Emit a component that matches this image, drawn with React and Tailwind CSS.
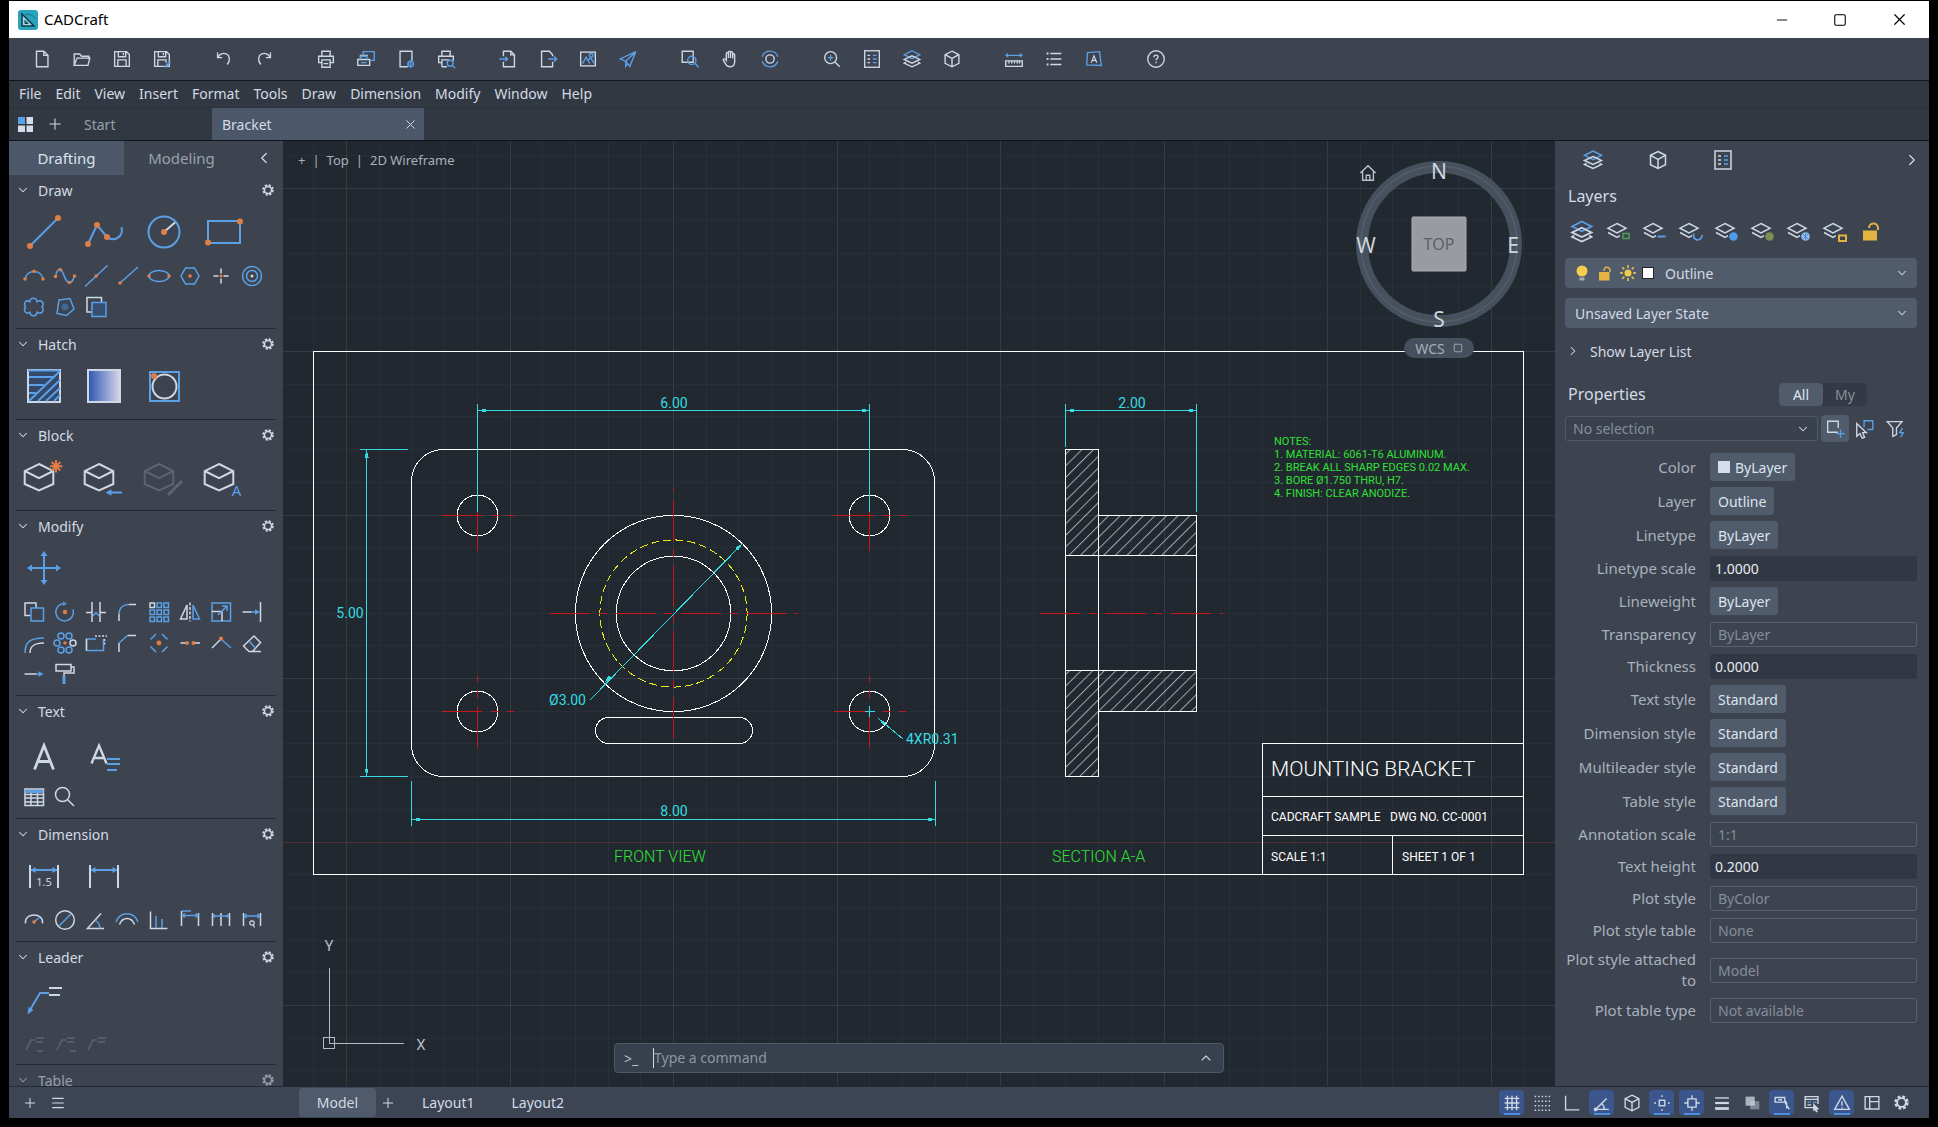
import { useState } from 'react';
import { ChevronDown, ChevronLeft, ChevronRight, ChevronUp, Menu, Minus, Plus, Square, X } from 'lucide-react';

const L = '#ced7e5';
const B = '#5b9fe6';
const O = '#e07e45';
const Y = '#e3b341';

function Icon({ size = 24, box = size, stroke = L, width = 1.5, children, className = '' }) {
  return (
    <svg width={size} height={size} viewBox={`0 0 ${box} ${box}`} fill="none" stroke={stroke} strokeWidth={width} className={`shrink-0 overflow-visible ${className}`} aria-hidden="true">
      {children}
    </svg>
  );
}

const Dot = ({ x, y, r = 1.8, c = O }) => <circle cx={x} cy={y} r={r} fill={c} stroke="none" />;

const Printer = () => (
  <>
    <path d="M7.5 9V3.5h9V9" />
    <path d="M7.5 16H4V9h16v7h-3.5M7.5 13h9v8h-9zM9.5 17h5" />
  </>
);

const Stack = () => (
  <>
    <path d="M12 3l8.5 4.3L12 11.600 3.500 7.300z" stroke={B} />
    <path d="M12 8.500l8.500 4-8.500 4-8.500-4z" />
    <path d="M5.500 15.300L3.500 16.500l8.500 4 8.500-4-2-1.200" />
  </>
);

const Cube = () => <path d="M12 3.500l7.500 3.800v9.400L12 20.500l-7.500-3.800V7.300zM4.500 7.300l7.500 4 7.500-4M12 11.300v9.200" />;

const List = () => (
  <>
    <rect x="4" y="3" width="16" height="18" />
    <path d="M7 8h3M7 12h3M7 16h3" />
    <path d="M13 8h4M13 12h4M13 16h4" stroke={B} />
  </>
);

// 24px command icons
const barIcons = {
  New: <path d="M6 3.500h8l4.500 4.500v12.500H6zM14 3.500V8h4.500" />,
  Open: <path d="M3.500 19V6.500h6l2 2.500h8v3M3.500 19l3-8h14l-2 8z" />,
  Save: <path d="M4 4h13l3 3v13H4zM8 4v5.500h8V4M7.500 20v-7h9v7M13.500 5.500v2.500" />,
  'Save as': (
    <>
      <path d="M4 4h13l3 3v13H4zM8 4v5.500h8V4M7.500 20v-7h9v3M13.500 5.500v2.500" />
      <path d="M21 15l-6 6" stroke={B} strokeWidth="2" />
    </>
  ),
  Undo: <path d="M5 5v5.500h5M5.500 10.500C7 6.500 11 5 14.500 6.500s5 6.500 1 11.500" />,
  Redo: <path d="M19 5v5.500h-5M18.500 10.500C17 6.500 13 5 9.500 6.500s-5 6.500-1 11.500" />,
  Print: <Printer />,
  'Batch plot': (
    <>
      <path d="M3 12.500h13v6.500H3zM6 12.500V8h8" />
      <path d="M9 8V4h12v9.500h-5M6 12.500V9h7v3.500M6.500 16h6" stroke={B} />
    </>
  ),
  'Page setup': (
    <>
      <path d="M14 20.500H5.500v-17h13V14" />
      <circle cx="17" cy="17.500" r="3" stroke={B} />
      <path d="M17 13.500v8M13.500 17.500h7" stroke={B} strokeWidth="1" />
    </>
  ),
  Preview: (
    <>
      <path d="M7.500 9V3.500h9V9M7.500 16H4V9h16v5M7.500 20.500V13h8M7.500 20.500H13" />
      <circle cx="16.500" cy="16.500" r="3.200" stroke={B} />
      <path d="M19 19l3 3" stroke={B} />
    </>
  ),
  Import: (
    <>
      <path d="M7 9V3.500h8l4 4v13H7V15M15 3.500v4h4" />
      <path d="M2.500 12h9M9 9.500l2.500 2.500L9 14.500" stroke={B} />
    </>
  ),
  Export: (
    <>
      <path d="M17 15v5.500H5v-17h8.500L17 7.500V9" />
      <path d="M12 12h9.500M18.500 9l3 3-3 3" stroke={B} />
    </>
  ),
  Image: (
    <>
      <rect x="4" y="4.500" width="16" height="15" />
      <path d="M6 17l4-7 4 7M12 13.500l3-2.500 4 6" stroke={B} />
      <circle cx="15.500" cy="8" r="2" stroke={B} />
    </>
  ),
  Send: <path d="M20.500 4L3.500 12l6 2.500zM20.500 4L9.500 14.500l4.500 5.500zM9.500 14.500V20l2-3" stroke={B} />,
  'Zoom window': (
    <>
      <path d="M3.500 3.500h12v12h-12z" />
      <circle cx="14" cy="13.500" r="4.500" stroke={B} />
      <path d="M17.500 17l4 4" stroke={B} />
    </>
  ),
  Pan: <path d="M8 12.500V6.200c0-1.800 2.300-1.800 2.300 0V11V4.700c0-1.800 2.300-1.800 2.300 0V11V5.500c0-1.800 2.300-1.800 2.300 0V11.500V7.500c0-1.600 2.200-1.600 2.200 0V15c0 4-2 5.500-5 5.500-3.200 0-4.300-1.500-5.500-4L4.500 13c.4-1.600 2-1.500 3.500.5z" />,
  Orbit: (
    <>
      <circle cx="12" cy="12" r="4.500" />
      <path d="M3.500 9.500A9 9 0 0120.500 9.500M20.500 14.500A9 9 0 013.500 14.500" stroke={B} />
    </>
  ),
  Zoom: (
    <>
      <circle cx="10.500" cy="10.500" r="6.500" />
      <path d="M15.200 15.200l5.300 5.300" />
      <path d="M7.500 10.500h6M10.500 7.500v6" stroke={B} />
    </>
  ),
  Properties: <List />,
  Layers: <Stack />,
  Blocks: <Cube />,
  Measure: (
    <>
      <path d="M3 8h18M5.500 6L3 8l2.500 2M18.500 6L21 8l-2.500 2" stroke={B} strokeWidth="1.200" />
      <path d="M3 14h18v6H3zM6.500 14v3M9.500 14v3M12.500 14v3M15.500 14v3M18 14v3" />
    </>
  ),
  'Quick select': (
    <>
      <path d="M8 6h12M8 12h12M8 18h12" />
      <path d="M4 6h2M4 12h2M4 18h2" strokeWidth="2" />
    </>
  ),
  'Text frame': (
    <>
      <path d="M5 5l13-1 2 15-16-.5z" stroke={B} />
      <path d="M9 16l3-7.500 3 7.500M10 13.500h4" strokeWidth="1.300" />
    </>
  ),
  Help: (
    <>
      <circle cx="12" cy="12" r="9" />
      <path d="M9.800 10c0-3 4.400-3 4.400-.2 0 1.600-2.200 1.700-2.200 3.600M12 15v1.500" />
    </>
  ),
};

const toolbar = [
  ['New', 'Open', 'Save', 'Save as'],
  ['Undo', 'Redo'],
  ['Print', 'Batch plot', 'Page setup', 'Preview'],
  ['Import', 'Export', 'Image', 'Send'],
  ['Zoom window', 'Pan', 'Orbit'],
  ['Zoom', 'Properties', 'Layers', 'Blocks'],
  ['Measure', 'Quick select', 'Text frame'],
  ['Help'],
];

const menus = ['File', 'Edit', 'View', 'Insert', 'Format', 'Tools', 'Draw', 'Dimension', 'Modify', 'Window', 'Help'];

const BlockBox = () => <path d="M15 7l14.300 7v13L15 33.500.700 27V14zM.700 14L15 21.200 29.300 14" />;

const DimFrame = () => (
  <>
    <path d="M6 9v23M34 9v23" />
    <path d="M7 14h26" stroke={B} />
    <path d="M6.500 14l5-3v6zM33.500 14l-5-3v6z" fill={B} stroke="none" />
  </>
);

const Leader = () => (
  <>
    <path d="M4 19l5-10h4" />
    <path d="M14 7h8M14 11h7" />
  </>
);

// 40px palette icons
const large = {
  Line: (
    <>
      <path d="M6 34L34 6" stroke={B} />
      <Dot x={6} y={34} r={3} /><Dot x={34} y={6} r={3} />
    </>
  ),
  Polyline: (
    <>
      <path d="M4 32l9-19 10 12c6 5 17 1 14.500-10" stroke={B} />
      <Dot x={4} y={32} r={3} /><Dot x={13} y={13} r={3} /><Dot x={23} y={25} r={3} />
    </>
  ),
  Circle: (
    <>
      <circle cx="20" cy="20" r="15.500" stroke={B} />
      <path d="M20 20l11-9.500" />
      <Dot x={20} y={20} r={3} />
    </>
  ),
  Rectangle: (
    <>
      <rect x="4" y="9" width="32" height="22" stroke={B} />
      <Dot x={36} y={9.5} r={3} /><Dot x={4} y={30.5} r={3} />
    </>
  ),
  Hatch: (
    <>
      <rect x="4" y="4" width="32" height="32" fill="#34496a" />
      <path d="M4 4.500h32M5 11h24M5 19h15M5 27h7M5 35L36 5M14 35L36 14M22 35l14-13M30 35l6-6" stroke={B} />
    </>
  ),
  Gradient: (
    <>
      <defs>
        <linearGradient id="blueFade">
          <stop offset="0" stopColor="#2c56b0" /><stop offset="1" stopColor="#d8d5ea" />
        </linearGradient>
      </defs>
      <rect x="4" y="4" width="32" height="32" fill="url(#blueFade)" />
    </>
  ),
  Boundary: (
    <>
      <rect x="6" y="6" width="29" height="29" stroke={B} />
      <circle cx="20.500" cy="20.500" r="12" />
      <Dot x={10} y={10} r={3} />
    </>
  ),
  'Create block': (
    <>
      <BlockBox />
      <path d="M32 3v12.500M26 9.200h12.500M27.800 5l8.500 8.500M36.300 5l-8.500 8.500" stroke={O} />
    </>
  ),
  'Insert block': (
    <>
      <BlockBox />
      <path d="M24 35.500h14" stroke={B} />
      <path d="M21.500 35.500l6-3.200v6.400z" fill={B} stroke="none" />
    </>
  ),
  'Edit block': (
    <g opacity="0.22">
      <BlockBox />
      <path d="M24 38l14-14" strokeWidth="3" />
    </g>
  ),
  Attribute: (
    <>
      <BlockBox />
      <text x="32.500" y="38.500" fontSize="15" textAnchor="middle" fill={B} stroke="none">A</text>
    </>
  ),
  Move: (
    <>
      <path d="M20 5v30M5 20h30" stroke={B} />
      <path d="M20 3l-3.500 5h7zM20 37l-3.500-5h7zM3 20l5-3.500v7zM37 20l-5-3.500v7z" fill={B} stroke="none" />
    </>
  ),
  Text: <path d="M10.500 36.500L20 12.500l9.500 24M14 28.500h12" strokeWidth="2.800" />,
  Mtext: (
    <>
      <path d="M7.500 30.500L15 12.500l7.500 18M10 25h10" strokeWidth="2.400" />
      <path d="M23 26h13M23 31h13M23 37h10" stroke={B} />
    </>
  ),
  Dimension: (
    <>
      <DimFrame />
      <text x="20" y="30" fontSize="11" textAnchor="middle" fill={L} stroke="none">1.5</text>
    </>
  ),
  Linear: <DimFrame />,
  Leader: (
    <>
      <path d="M6 31l10-17h9" stroke={B} />
      <path d="M3.500 35.500l1-7.500 5 3z" fill={B} stroke="none" />
      <path d="M25 9h13M25 16h11" />
    </>
  ),
};

// 24px palette icons
const small = {
  Arc: (
    <>
      <path d="M3 15C5 5 19 5 21 15" stroke={B} />
      <Dot x={3} y={15} /><Dot x={12} y={7.3} /><Dot x={21} y={15} />
    </>
  ),
  Spline: (
    <>
      <path d="M2.500 12.500C4.500 3.500 8 3.500 10 9s3.500 9.500 6.500 9.500S20 16 21.500 12" stroke={B} />
      <Dot x={2.5} y={12.5} /><Dot x={7.3} y={5.8} /><Dot x={16.5} y={18.5} /><Dot x={21.5} y={12} />
    </>
  ),
  'Construction line': (<><path d="M1 22.500L23.500 1.500" stroke={B} /><Dot x={12.2} y={12} /></>),
  Ray: (<><path d="M5 19L23 3" stroke={B} /><Dot x={5} y={19} /></>),
  Ellipse: (<><ellipse cx="12" cy="12" rx="10" ry="5.500" stroke={B} /><Dot x={2} y={12} /><Dot x={22} y={12} /></>),
  Polygon: (<><path d="M7.500 4h9l4.500 8-4.500 8h-9L3 12z" stroke={B} /><Dot x={12} y={12} /></>),
  Point: (<><path d="M12 4.500v5M12 14.500v5M4.500 12h5M14.500 12h5" /><Dot x={12} y={12} r={1.6} /></>),
  Donut: (<><circle cx="12" cy="12" r="9.500" stroke={B} /><circle cx="12" cy="12" r="5.500" stroke={B} /><Dot x={12} y={12} r={1.5} c={L} /></>),
  'Revision cloud': <path d="M8 7c-1-5 7-5 7 0 4-3 8 1 5 5 3 4-1 8-5 5 0 5-7 5-7 0-4 3-7-1-4.500-5C1 8 4 4 8 7z" stroke={B} strokeLinejoin="round" />,
  Region: (<><path d="M6 5l11-1.500 4 10.500-7.500 6.500-9.500-2z" stroke={B} /><Dot x={12} y={12} r={3.5} c="#3d6795" /></>),
  Wipeout: (<><path d="M7.500 17H3V2.500h14.500V7" /><rect x="8" y="7.500" width="14" height="14" stroke={B} fill="#37506f" /></>),
  Copy: (<><path d="M8.500 15.500H3V3h11v5" /><rect x="9" y="8" width="12.500" height="13" stroke={B} /></>),
  Rotate: (<><path d="M10 3.500A8.800 8.800 0 1020 9.500" stroke={B} /><path d="M10 1v5l4-2z" fill={B} stroke="none" opacity="0.8" /><Dot x={12} y={12} r={2.2} /></>),
  Trim: (<><path d="M8 2v20M16 2v20M2 12.500h6M16 12.500h6" /><path d="M9 16l3-3.500 3 3.500" stroke={B} /></>),
  Fillet: (<><path d="M4 21v-7M14 4.500h7" /><path d="M4 14c0-6 4-9.500 10-9.500" stroke={B} /></>),
  Array: (
    <>
      <path d="M3 3h4.500v4.500H3z" />
      <path d="M10 3h4.500v4.500H10zM17 3h4.500v4.500H17zM3 10h4.500v4.500H3zM10 10h4.500v4.500H10zM17 10h4.500v4.500H17zM3 17h4.500v4.500H3zM10 17h4.500v4.500H10zM17 17h4.500v4.500H17z" stroke={B} />
    </>
  ),
  Mirror: (<><path d="M9 5v14H2.500z" /><path d="M15 5v14h6.500z" stroke={B} /><path d="M12 2.500v19" strokeDasharray="3 1.500" /></>),
  Scale: (<><rect x="3" y="3" width="18.500" height="18" stroke={B} /><path d="M3 11.500h10V21" /><path d="M9 15l8.500-8.500M13 6h5v5" stroke={B} /></>),
  Extend: (<><path d="M20.500 2v20M2.500 12h9" /><path d="M11 12h6" stroke={B} /><path d="M20 12l-5-2.800v5.600z" fill={B} stroke="none" /></>),
  Offset: (<><path d="M3 22c0-11 5-15 19-15" stroke={B} /><path d="M8 22c0-7 4-10 14-10" /></>),
  'Polar array': (
    <>
      <g stroke={B}>
        <circle cx="8" cy="5" r="3" /><circle cx="16" cy="5" r="3" /><circle cx="4" cy="12" r="3" />
        <circle cx="8" cy="19" r="3" /><circle cx="16" cy="19" r="3" />
      </g>
      <circle cx="20" cy="12" r="3" />
      <Dot x={12} y={12} />
    </>
  ),
  Stretch: (<><path d="M12 8H2.500v11.500h17V8" stroke={B} /><path d="M11 5h12M20.500 8v6" strokeDasharray="2 1.500" /><path d="M2.500 19.500V8" /></>),
  Chamfer: (<><path d="M4 21v-9M12.500 4.500H21" /><path d="M4 12l8.500-7.500" stroke={B} /></>),
  Explode: (<><path d="M9 3L3.500 8.500M15 3l5.500 5.500M3.500 15.500L9 21M20.500 15.500L15 21" stroke={B} /><Dot x={12} y={12} r={2.4} /></>),
  Break: (<><path d="M2.500 12h7M14 12h8" /><Dot x={9} y={12} r={2} /><Dot x={15.5} y={12} r={2} /></>),
  Join: (<><path d="M3 17l9-9" /><path d="M12 8l10 9" stroke={B} /><Dot x={12} y={7.5} r={2} /></>),
  Erase: (<><path d="M3.500 15L14 5l6.500 6.500-8 9H9zM9 20.500h12" /><path d="M9 10l6.500 7" stroke={B} /></>),
  Lengthen: (<><path d="M2.500 12h12" /><path d="M14 12h4" stroke={B} /><path d="M21.500 12l-5-2.800v5.600z" fill={B} stroke="none" /></>),
  'Match properties': (<><path d="M3 2.500h15v6.500H3zM18 5h3v6h-10v3" /><path d="M11 14v8" stroke={B} strokeWidth="3" /></>),
  Table: (<><rect x="3" y="4" width="18.500" height="16.500" /><path d="M3 6.500h18.500" stroke={B} strokeWidth="3" /><path d="M3 9.500h18.500M3 13h18.500M3 17h18.500M9 8v12.500M15.500 8v12.500" /></>),
  Find: (<><circle cx="9.500" cy="9.500" r="7" /><path d="M14.500 14.500l6.500 6.500" /></>),
  Radius: (<><path d="M3.500 15.500C2 4 22 4 20.500 15.500" /><path d="M12 14l5.500-4.500" stroke={B} /><Dot x={12} y={14} /></>),
  Diameter: (<><circle cx="12" cy="12" r="9.300" /><path d="M6 18L18 6" stroke={B} /></>),
  Angular: (<><path d="M20 20.500H3.500L17 5.500" /><path d="M11.500 12.500c3 2 4.500 4.500 4.500 8" stroke={B} /></>),
  'Arc length': (<><path d="M1 14C5 3 19 3 23 14" stroke={B} /><path d="M4.500 16.500c3-8 12-8 15 0" /></>),
  Ordinate: (<><path d="M3.500 3.500v17h17" /><path d="M9 20V8M15 20v-9" stroke={B} /></>),
  Baseline: (<><path d="M3.500 3v15M20.500 5v13" /><path d="M4 3h9M4 7.500h16M7 5.500L4.500 7.500 7 9.500M17.500 5.500L20 7.500l-2.500 2" stroke={B} /></>),
  Continue: (<><path d="M3.500 5v13M12 5v13M20.500 5v13" /><path d="M4 8h16M6 6.500L4.500 8 6 9.500M18 6.500L19.500 8 18 9.500" stroke={B} /></>),
  Quick: (<><path d="M3.500 5v13M20.500 5v13" /><path d="M4 8h16M6.500 6L4.500 8l2 2M17.500 6l2 2-2 2" stroke={B} /><circle cx="12" cy="15" r="2.200" strokeWidth="1.200" /><path d="M13 16.500l1.500 3" strokeWidth="1.200" /></>),
  'Add leader': <g opacity="0.22"><Leader /><path d="M15 20h6" /></g>,
  'Remove leader': <g opacity="0.22"><Leader /><path d="M17 20h6" /></g>,
  'Align leader': <g opacity="0.22"><Leader /></g>,
};

const sections = [
  {
    title: 'Draw',
    large: ['Line', 'Polyline', 'Circle', 'Rectangle'],
    small: ['Arc', 'Spline', 'Construction line', 'Ray', 'Ellipse', 'Polygon', 'Point', 'Donut', 'Revision cloud', 'Region', 'Wipeout'],
  },
  { title: 'Hatch', large: ['Hatch', 'Gradient', 'Boundary'], small: [] },
  { title: 'Block', large: ['Create block', 'Insert block', 'Edit block', 'Attribute'], small: [] },
  {
    title: 'Modify',
    large: ['Move'],
    small: ['Copy', 'Rotate', 'Trim', 'Fillet', 'Array', 'Mirror', 'Scale', 'Extend', 'Offset', 'Polar array', 'Stretch', 'Chamfer', 'Explode', 'Break', 'Join', 'Erase', 'Lengthen', 'Match properties'],
  },
  { title: 'Text', large: ['Text', 'Mtext'], small: ['Table', 'Find'] },
  { title: 'Dimension', large: ['Dimension', 'Linear'], small: ['Radius', 'Diameter', 'Angular', 'Arc length', 'Ordinate', 'Baseline', 'Continue', 'Quick'] },
  { title: 'Leader', large: ['Leader'], small: ['Add leader', 'Remove leader', 'Align leader'] },
  { title: 'Table', large: [], small: [], dim: true },
];

function Gear({ size = 12 }) {
  return (
    <Icon size={size} box={24}>
      <circle cx="12" cy="12" r="9.500" strokeWidth="4" strokeDasharray="4.500 2.960" />
      <circle cx="12" cy="12" r="7" strokeWidth="3" />
    </Icon>
  );
}

function Section({ title, large: big, small: little, dim }) {
  return (
    <section className={`mx-[7px] border-b border-[#232a35] pb-[6px] ${dim ? 'opacity-60' : ''}`}>
      <div className="flex h-[30px] items-center pr-[2px]">
        <button type="button" className="flex flex-1 items-center gap-2 text-left text-[14px]">
          <ChevronDown size={14} strokeWidth={1.8} />
          {title}
        </button>
        <button type="button" aria-label={`${title} settings`}><Gear /></button>
      </div>
      {big.length > 0 && (
        <div className="flex h-[54px] gap-1">
          {big.map((name) => (
            <button key={name} type="button" aria-label={name} className="flex w-14 items-center justify-center">
              <Icon size={40} width={2}>{large[name]}</Icon>
            </button>
          ))}
        </div>
      )}
      {little.length > 0 && (
        <div className="grid grid-cols-8 pt-px pr-2 pl-[2px]">
          {little.map((name) => (
            <button key={name} type="button" aria-label={name} className="flex h-[31px] items-center justify-center">
              <Icon>{small[name]}</Icon>
            </button>
          ))}
        </div>
      )}
    </section>
  );
}

function Palette() {
  return (
    <aside className="flex w-[274px] shrink-0 flex-col overflow-hidden bg-[#3d444f]">
      <div className="flex h-[34px] shrink-0 items-center text-[15px]">
        <button type="button" className="h-full w-[115px] bg-[#4c586a] text-[#dbe3ee]">Drafting</button>
        <button type="button" className="h-full w-[115px] text-[#99a1ae]">Modeling</button>
        <button type="button" aria-label="Collapse palette" className="ml-4"><ChevronLeft size={18} strokeWidth={1.6} /></button>
      </div>
      <div className="min-h-0 flex-1 overflow-hidden">
        {sections.map((s) => <Section key={s.title} {...s} />)}
      </div>
    </aside>
  );
}

// Drawing units to canvas pixels: one unit is 65.4px, origin at (346, 842).
const U = 65.4;
const px = (x) => Math.round(346 + x * U) + 0.5;
const py = (y) => Math.round(841.5 - y * U) + 0.5;
const CYAN = '#35dbe0';
const RED = '#c8171c';
const GREEN = '#2fe035';

const Seg = ({ a, b, c = '#ffffff', dash }) => (
  <line x1={px(a[0])} y1={py(a[1])} x2={px(b[0])} y2={py(b[1])} stroke={c} strokeDasharray={dash} />
);

const Arrow = ({ x, y, turn }) => <path d="M0 0l8-2v4z" fill={CYAN} stroke="none" transform={`translate(${px(x)} ${py(y)}) rotate(${turn})`} />;

const Label = ({ x, y, size = 14, weight = 400, fill = CYAN, anchor = 'start', children }) => (
  <text x={x} y={y} fontSize={size} fontWeight={weight} fill={fill} textAnchor={anchor} stroke="none">{children}</text>
);

const CENTER_DASH = '40.9 8.2 8.2 8.2';

function CenterMark({ x, y, r }) {
  return (
    <>
      <Seg a={[x - r, y]} b={[x + r, y]} c={RED} dash={CENTER_DASH} />
      <Seg a={[x, y - r]} b={[x, y + r]} c={RED} dash={CENTER_DASH} />
    </>
  );
}

const notes = ['NOTES:', '1. MATERIAL: 6061-T6 ALUMINUM.', '2. BREAK ALL SHARP EDGES 0.02 MAX.', '3. BORE Ø1.750 THRU, H7.', '4. FINISH: CLEAR ANODIZE.'];

function Drawing() {
  const grid = [];
  for (let i = -2; i <= 37; i++) {
    if (i !== 0) grid.push(<line key={`v${i}`} x1={px(i / 2)} x2={px(i / 2)} y1="141" y2="1086" stroke={i % 5 ? '#282f38' : '#333e44'} />);
  }
  for (let j = -7; j <= 21; j++) {
    if (j !== 0) grid.push(<line key={`h${j}`} x1="283" x2="1555" y1={py(j / 2)} y2={py(j / 2)} stroke={j % 5 ? '#282f38' : '#333e44'} />);
  }
  const holes = [[2, 2], [8, 2], [2, 5], [8, 5]];
  return (
    <svg className="absolute inset-0 h-full w-full" viewBox="283 141 1272 945" preserveAspectRatio="xMidYMid slice" fill="none" stroke="#ffffff" strokeWidth="1" shapeRendering="crispEdges" fontFamily="Roboto, sans-serif" role="img" aria-label="Mounting bracket drawing">
      <defs>
        <pattern id="ansi31" width="8.200" height="8.200" patternUnits="userSpaceOnUse" patternTransform="rotate(45)">
          <path d="M0.500 0v8.200" stroke="#a3a6aa" strokeWidth="1" shapeRendering="auto" />
        </pattern>
      </defs>
      {grid}
      <line x1={px(0)} x2={px(0)} y1="141" y2="1086" stroke="#2b4334" />
      <line x1="283" x2="1555" y1={py(0)} y2={py(0)} stroke="#553033" />
      <rect x={px(-0.5)} y={py(7.5)} width="1210" height="523" />
      <path d={`M${px(14)} ${py(-0.5)}V${py(1.5)}H${px(18)}M${px(14)} ${py(0.69)}H${px(18)}M${px(14)} ${py(0.1)}H${px(18)}M${px(16)} ${py(0.1)}V${py(-0.5)}`} />

      {/* front view */}
      <rect x={px(1)} y={py(6)} width="523" height="327" rx="32" />
      <rect x={px(3.8)} y={py(1.9)} width="157" height="26" rx="13" />
      <circle cx={px(5)} cy={py(3.5)} r={1.5 * U} />
      <circle cx={px(5)} cy={py(3.5)} r={1.125 * U} stroke="#eaea1c" strokeDasharray="8 4" />
      <circle cx={px(5)} cy={py(3.5)} r={0.875 * U} />
      {holes.map(([x, y]) => (
        <g key={`${x}-${y}`}>
          <circle cx={px(x)} cy={py(y)} r={0.3125 * U} />
          <CenterMark x={x} y={y} r={0.55} />
        </g>
      ))}
      <CenterMark x={5} y={3.5} r={1.9} />

      {/* section A-A */}
      <path d={`M${px(11)} ${py(6)}H${px(11.5)}V${py(5)}H${px(13)}V${py(4.375)}H${px(11)}zM${px(11)} ${py(2.625)}H${px(13)}V${py(2)}H${px(11.5)}V${py(1)}H${px(11)}z`} fill="url(#ansi31)" />
      <path d={`M${px(11)} ${py(6)}V${py(1)}M${px(11.5)} ${py(6)}V${py(1)}M${px(13)} ${py(5)}V${py(2)}`} />
      <Seg a={[10.6, 3.5]} b={[13.4, 3.5]} c={RED} dash={CENTER_DASH} />

      {/* dimensions */}
      <Seg a={[2, 6.6]} b={[8, 6.6]} c={CYAN} />
      <Seg a={[2, 6.7]} b={[2, 5.06]} c={CYAN} />
      <Seg a={[8, 6.7]} b={[8, 5.06]} c={CYAN} />
      <Arrow x={2} y={6.6} turn={0} /><Arrow x={8} y={6.6} turn={180} />
      <Seg a={[0.3, 6]} b={[0.3, 1]} c={CYAN} />
      <Seg a={[0.2, 6]} b={[0.93, 6]} c={CYAN} />
      <Seg a={[0.2, 1]} b={[0.93, 1]} c={CYAN} />
      <Arrow x={0.3} y={6} turn={90} /><Arrow x={0.3} y={1} turn={-90} />
      <Seg a={[1, 0.35]} b={[9, 0.35]} c={CYAN} />
      <Seg a={[1, 0.94]} b={[1, 0.25]} c={CYAN} />
      <Seg a={[9, 0.94]} b={[9, 0.25]} c={CYAN} />
      <Arrow x={1} y={0.35} turn={0} /><Arrow x={9} y={0.35} turn={180} />
      <Seg a={[11, 6.6]} b={[13, 6.6]} c={CYAN} />
      <Seg a={[11, 6.7]} b={[11, 6.05]} c={CYAN} />
      <Seg a={[13, 6.7]} b={[13, 5.06]} c={CYAN} />
      <Arrow x={11} y={6.6} turn={0} /><Arrow x={13} y={6.6} turn={180} />
      <Seg a={[6.06, 4.56]} b={[3.71, 2.16]} c={CYAN} />
      <Arrow x={6.06} y={4.56} turn={135} /><Arrow x={3.94} y={2.44} turn={-45} />
      <Seg a={[7.92, 2]} b={[8.08, 2]} c={CYAN} />
      <Seg a={[8, 2.08]} b={[8, 1.92]} c={CYAN} />
      <Seg a={[8.14, 1.89]} b={[8.52, 1.56]} c={CYAN} />
      <Arrow x={8.14} y={1.89} turn={42} />

      <Label x={674} y={408} anchor="middle">6.00</Label>
      <Label x={350} y={618} anchor="middle">5.00</Label>
      <Label x={674} y={816} anchor="middle">8.00</Label>
      <Label x={1132} y={408} anchor="middle">2.00</Label>
      <Label x={549} y={705}>Ø3.00</Label>
      <Label x={906} y={744}>4XR0.31</Label>
      <Label x={614} y={862} size={16} weight={300} fill={GREEN}>FRONT VIEW</Label>
      <Label x={1052} y={862} size={16} weight={300} fill={GREEN}>SECTION A-A</Label>
      {notes.map((n, i) => <Label key={n} x={1274} y={445 + i * 13} size={11} fill={GREEN}>{n}</Label>)}
      <Label x={1271} y={776} size={21} weight={300} fill="#ffffff">MOUNTING BRACKET</Label>
      <Label x={1271} y={821} size={12} fill="#ffffff">CADCRAFT SAMPLE</Label>
      <Label x={1390} y={821} size={12} fill="#ffffff">DWG NO. CC-0001</Label>
      <Label x={1271} y={861} size={12} fill="#ffffff">SCALE 1:1</Label>
      <Label x={1402} y={861} size={12} fill="#ffffff">SHEET 1 OF 1</Label>

      {/* UCS icon */}
      <path d="M329.500 968v75.500h74M323.500 1037.500h11v11h-11z" stroke="#b4bac2" />
      <Label x={329} y={951} size={15} fill="#b4bac2" anchor="middle">Y</Label>
      <Label x={421} y={1050} size={15} fill="#b4bac2" anchor="middle">X</Label>
    </svg>
  );
}

function ViewCube() {
  return (
    <div className="absolute top-[19px] right-8 flex w-[168px] flex-col items-center">
      <svg width="168" height="168" viewBox="0 0 168 168" fill="none" aria-label="View cube" className="overflow-visible text-[21px]">
        <circle cx="84" cy="84" r="77" stroke="#46515d" strokeWidth="12" />
        <circle cx="84" cy="84" r="78" stroke="#5a6672" strokeWidth="1" />
        <rect x="57" y="57" width="54" height="54" rx="1" fill="#989ca1" stroke="#a9adb2" />
        <g fill="#cdd5de" textAnchor="middle">
          <text x="84" y="19">N</text>
          <text x="84" y="167">S</text>
          <text x="11" y="93">W</text>
          <text x="158" y="93">E</text>
          <text x="84" y="90" fontSize="16" fill="#5c6065">TOP</text>
        </g>
      </svg>
      <button type="button" className="mt-[10px] flex h-5 w-[70px] items-center justify-center gap-2 rounded-full bg-[#46505d] text-[14px] text-[#a8aeb7]">
        WCS <Square size={10} strokeWidth={2} />
      </button>
      <button type="button" aria-label="Home view" className="absolute top-[4px] left-[4px]">
        <Icon size={18} box={20} stroke="#bcc3cc"><path d="M1.500 10L10 2l8.500 8M4 8v10h12V8M8 18v-5.500h4V18" /></Icon>
      </button>
    </div>
  );
}

function Canvas() {
  return (
    <main className="relative min-w-0 flex-1 overflow-hidden bg-[#222830]">
      <Drawing />
      <div className="relative flex items-center gap-[7px] px-[15px] py-[10px] text-[13px] text-[#a9b0b9]">
        <button type="button">+</button>
        <span>|</span>
        <button type="button">Top</button>
        <span>|</span>
        <button type="button">2D Wireframe</button>
      </div>
      <ViewCube />
      <label className="absolute bottom-[13px] left-1/2 flex h-[30px] w-[610px] -translate-x-1/2 items-center rounded-[4px] border border-[#4d5966] bg-[#37414e] px-[9px] text-[14px] text-[#c6ced8]">
        <span className="w-[29px] text-[#b8c0ca]">&gt;_</span>
        <input aria-label="Command" placeholder="Type a command" className="min-w-0 flex-1 border-l border-[#d5dbe3] bg-transparent leading-[20px] outline-none placeholder:text-[#8d96a1]" />
        <ChevronUp size={16} strokeWidth={1.6} />
      </label>
    </main>
  );
}

const Sheets = () => <path d="M12 4.500l9 4.700-9 4.600-9-4.600zM3 13.500l9 4.800 3-1.600" />;

const layerTools = {
  'Layer manager': <g transform="translate(-1 -1) scale(1.150)"><Stack /></g>,
  'New layer': <><Sheets /><rect x="18" y="14.500" width="6" height="5" stroke="#4e9a58" /></>,
  'Delete layer': <><Sheets /><path d="M16.500 17.500h8" stroke={B} strokeWidth="2" /></>,
  'Refresh layers': <><Sheets /><path d="M17 14.500a4.300 4.300 0 108 1.500" stroke={B} strokeWidth="1.800" /></>,
  'Isolate layer': <><Sheets /><Dot x={20.5} y={17.5} r={4.3} c="#4c9cea" /></>,
  'Turn off layer': <><Sheets /><Dot x={20.5} y={17.5} r={4.3} c="#7d8f55" /></>,
  'Freeze layer': <><Sheets /><Dot x={20.5} y={17.5} r={4.3} c="#8dbdf0" /><path d="M18 15l5 5M23 15l-5 5M20.500 14v7" stroke="#4a7fc0" strokeWidth="0.800" /></>,
  'Lock layer': <><Sheets /><rect x="18" y="16.500" width="7" height="5.500" stroke={Y} strokeWidth="2" /></>,
  'Unlock layer': <><rect x="6" y="11.500" width="14" height="10" fill={Y} stroke="none" /><path d="M12 9c0-6 9-6 9 0v2" stroke={Y} strokeWidth="2" /></>,
};

function Chevron() {
  return <ChevronDown size={14} strokeWidth={1.8} className="pointer-events-none absolute top-1/2 right-2 -translate-y-1/2" />;
}

const rows = [
  ['Color', 'ByLayer', 'chip', true],
  ['Layer', 'Outline', 'chip'],
  ['Linetype', 'ByLayer', 'chip'],
  ['Linetype scale', '1.0000', 'input'],
  ['Lineweight', 'ByLayer', 'chip'],
  ['Transparency', 'ByLayer', 'off'],
  ['Thickness', '0.0000', 'input'],
  ['Text style', 'Standard', 'chip'],
  ['Dimension style', 'Standard', 'chip'],
  ['Multileader style', 'Standard', 'chip'],
  ['Table style', 'Standard', 'chip'],
  ['Annotation scale', '1:1', 'off'],
  ['Text height', '0.2000', 'input'],
  ['Plot style', 'ByColor', 'off'],
  ['Plot style table', 'None', 'off'],
  ['Plot style attached to', 'Model', 'off'],
  ['Plot table type', 'Not available', 'off'],
];

function PropertyRow({ label, value, kind, swatch }) {
  const id = label.toLowerCase().replaceAll(' ', '-');
  return (
    <div className={`grid grid-cols-[131px_minmax(0,1fr)] items-center gap-[14px] ${kind === 'chip' ? 'min-h-[34px]' : 'min-h-8'}`}>
      <label htmlFor={id} className="py-[3px] text-right text-[15px] leading-[21px] text-[#a9b1be]">{label}</label>
      {kind === 'chip' && (
        <button id={id} type="button" className="flex h-7 items-center gap-[5px] justify-self-start rounded-[3px] bg-[#505b6b] px-2 text-[14px] text-[#dde4ee]">
          {swatch && <span className="size-3 bg-[#d5ddec]" />}
          {value}
        </button>
      )}
      {kind === 'input' && <input id={id} defaultValue={value} className="h-[25px] w-full min-w-0 rounded-[3px] bg-[#323843] px-[5px] text-[14px] text-[#e4e9f0] outline-none" />}
      {kind === 'off' && <input id={id} defaultValue={value} disabled className="h-[25px] w-full min-w-0 rounded-[3px] border border-[#566170] px-[7px] text-[14px] text-[#858d9a]" />}
    </div>
  );
}

function Inspector() {
  const [scope, setScope] = useState('All');
  return (
    <aside className="flex w-[374px] shrink-0 flex-col overflow-hidden bg-[#3d444f] pr-3 pl-[10px]">
      <div className="flex h-[37px] items-center gap-[41px] pl-4">
        <button type="button" aria-label="Layers panel"><Icon><Stack /></Icon></button>
        <button type="button" aria-label="Blocks panel"><Icon><Cube /></Icon></button>
        <button type="button" aria-label="Properties panel"><Icon><List /></Icon></button>
        <button type="button" aria-label="Collapse panel" className="-mr-1 ml-auto"><ChevronRight size={18} strokeWidth={1.6} /></button>
      </div>
      <h2 className="flex h-9 items-center pl-[3px] text-[16px]">Layers</h2>
      <div className="flex h-[38px] items-center gap-2 pl-1">
        {Object.entries(layerTools).map(([name, icon]) => (
          <button key={name} type="button" aria-label={name} className="w-7">
            <Icon size={28}>{icon}</Icon>
          </button>
        ))}
      </div>
      <div className="relative mt-[6px] text-[14px]">
        <select aria-label="Current layer" className="block h-[30px] w-full appearance-none rounded-[4px] bg-[#505b6b] pl-[100px] outline-none">
          <option>Outline</option>
        </select>
        <div className="pointer-events-none absolute inset-y-0 left-[8px] flex items-center gap-[5px]">
          <Icon size={18}>
            <Dot x={9} y={7} r={5.5} c="#f3cd4b" />
            <path d="M6.500 13.500h5v3h-5z" fill="#a9aeb6" stroke="none" />
          </Icon>
          <Icon size={18}><rect x="3" y="8" width="10.500" height="8.500" fill={Y} stroke="none" /><path d="M8 7c0-5 6-5 6 0v1" stroke={Y} /></Icon>
          <Icon size={18} stroke="#f0cb4e"><Dot x={9} y={9} r={3.5} c="#f0cb4e" /><path d="M9 1v3M9 14v3M1 9h3M14 9h3M3.300 3.300l2 2M12.700 12.700l2 2M14.700 3.300l-2 2M5.300 12.700l-2 2" /></Icon>
          <span className="size-3 border border-[#20242b] bg-white" />
        </div>
        <Chevron />
      </div>
      <div className="relative mt-[10px] text-[14px]">
        <select aria-label="Layer state" className="block h-[30px] w-full appearance-none rounded-[4px] bg-[#505b6b] pl-[10px] outline-none">
          <option>Unsaved Layer State</option>
        </select>
        <Chevron />
      </div>
      <button type="button" className="mt-[7px] flex h-8 items-center gap-[10px] pl-[1px] text-left text-[14px]">
        <ChevronRight size={14} strokeWidth={1.8} />
        Show Layer List
      </button>
      <div className="mt-[9px] flex h-9 items-center pl-[3px]">
        <h2 className="flex-1 text-[16px]">Properties</h2>
        <div className="mr-[50px] flex overflow-hidden rounded-[4px] bg-[#343a45] text-[14px] leading-[23px]">
          {['All', 'My'].map((name) => (
            <button key={name} type="button" onClick={() => setScope(name)} className={`w-11 rounded-[4px] ${scope === name ? 'bg-[#505b6b] text-[#dde4ee]' : 'text-[#858d9a]'}`}>{name}</button>
          ))}
        </div>
      </div>
      <div className="mt-[3px] flex items-center pr-[6px]">
        <div className="relative flex-1 text-[14px] text-[#858d9a]">
          <select aria-label="Selection" className="block h-[25px] w-full appearance-none rounded-[3px] border border-[#505a67] bg-[#3a414c] pl-[7px] outline-none">
            <option>No selection</option>
          </select>
          <span className="text-[#ced7e5]"><Chevron /></span>
        </div>
        <button type="button" aria-label="Add to selection" className="ml-[3px] flex h-[27px] w-7 items-center justify-center rounded-[4px] bg-[#505b6b]">
          <Icon size={22} box={24}><path d="M15 15.500H4V3.500h11.500V11" /><path d="M18 12.500v9M13.500 17h9" stroke={B} /></Icon>
        </button>
        <button type="button" aria-label="Pick objects" className="flex w-[31px] justify-center">
          <Icon size={22} box={24}><path d="M3 6v14l3.500-3 2.500 5 2.500-1-2-5h4z" /><path d="M11 10V3h9.500v9.500h-6" stroke={B} /></Icon>
        </button>
        <button type="button" aria-label="Filter" className="flex w-[31px] justify-center">
          <Icon size={22} box={24}><path d="M2.500 4h16l-6 7v7l-4 2v-9z" /><path d="M19 11l-3 5h4l-3 5" stroke={B} /></Icon>
        </button>
      </div>
      <div className="mt-2">
        {rows.map(([label, value, kind, swatch]) => <PropertyRow key={label} label={label} value={value} kind={kind} swatch={swatch} />)}
      </div>
    </aside>
  );
}

const statusTools = [
  ['Grid', true, <path d="M7 4v16M12 4v16M17 4v16M4 7h16M4 12h16M4 17h16" />],
  ['Snap', false, <path d="M4 5h17M4 10h17M4 15h17M4 20h17" strokeWidth="1.600" strokeDasharray="1.600 2.200" />],
  ['Ortho', false, <path d="M5 4v15.500h15" />],
  ['Polar', true, <><path d="M19.500 19H5L17 7M11.500 12.500c2 1.500 3 3.500 3 6" /><Dot x={5} y={19} r={2} c={L} /></>],
  ['Isometric', false, <Cube />],
  ['Object snap', true, <><rect x="9" y="9" width="6" height="6" /><path d="M12 3.500v2M12 18.500v2M3.500 12h2M18.500 12h2" /></>],
  ['Tracking', true, <path d="M7.500 7.500h9v9h-9zM12 3.500v4M12 16.500v4M3.500 12h4M16.500 12h4" />],
  ['Lineweight display', false, <><path d="M4.500 6.500h15" /><path d="M4.500 12h15" strokeWidth="2.400" /><path d="M4.500 18h15" strokeWidth="3" /></>],
  ['Transparency display', false, <g stroke="none"><path d="M5 5h10v10H5z" fill="#aab2be" /><path d="M10 10h10v9H10z" fill="#cfd6e0" opacity="0.450" /></g>],
  ['Dynamic input', true, <path d="M15 11H4.500V6H15zM8 8.500h4M15 9l2 3v6M15.500 12l4.500 7" />],
  ['Quick properties', false, <><path d="M16 17H4.500V5h14v8M4.500 8h14M7 14h4" /><path d="M7 11h4M13 11h4" stroke={B} /><path d="M13.500 12.500l6 6-2.500.5 1 2.500-1.500.5-1-2.500-2 1z" fill={L} strokeWidth="0.500" /></>],
  ['Annotation monitor', true, <path d="M12 4.500L20 19H4zM12 10v5M12 16.500v1.500" />],
  ['Workspace', false, <path d="M4.500 5h15v13.500h-15zM9.500 5v13.500M9.500 10.500h10" />],
];

function StatusBar() {
  return (
    <footer className="flex h-8 shrink-0 items-center border-t border-[#232a35] bg-[#3d4454] text-[14px]">
      <div className="flex w-[290px] shrink-0 items-center gap-3 pl-[13px]">
        <button type="button" aria-label="Add palette"><Plus size={16} strokeWidth={1.5} /></button>
        <button type="button" aria-label="Palette menu"><Menu size={16} strokeWidth={1.8} /></button>
      </div>
      <button type="button" className="h-[29px] w-[77px] rounded-[3px] bg-[#4f5b6c]">Model</button>
      <button type="button" aria-label="New layout" className="ml-1"><Plus size={16} strokeWidth={1.5} /></button>
      <button type="button" className="ml-[26px]">Layout1</button>
      <button type="button" className="ml-[37px]">Layout2</button>
      <div className="mr-[15px] ml-auto flex gap-[5px]">
        {statusTools.map(([name, active, icon]) => (
          <button key={name} type="button" aria-label={name} aria-pressed={active} className={`relative flex size-[25px] items-center justify-center rounded-[4px] ${active ? 'bg-[#3a568c]' : ''}`}>
            <Icon size={22} box={24}>{icon}</Icon>
            {active && <span className="absolute bottom-0 h-[2px] w-4 bg-[#4d8ee0]" />}
          </button>
        ))}
        <button type="button" aria-label="Settings" className="flex size-[25px] items-center justify-center"><Gear size={15} /></button>
      </div>
    </footer>
  );
}

export default function App() {
  return (
    <div className="flex h-screen min-w-[1400px] flex-col overflow-hidden bg-black px-[9px] pt-px pb-[9px] font-['Noto_Sans','Open_Sans',sans-serif] text-[#d3dae5]">
      <header className="flex h-[37px] shrink-0 items-center bg-white text-black">
        <svg width="20" height="20" viewBox="0 0 20 20" fill="none" className="ml-[9px]" aria-hidden="true">
          <rect width="20" height="20" rx="3" fill="#2aa3bd" />
          <path d="M4 4v12h12z" fill="#9adbe6" stroke="#103a4a" strokeWidth="1.500" />
          <path d="M7 10.500v3h3z" fill="#2aa3bd" stroke="#103a4a" />
          <path d="M7 5c4-2 8 0 10.500 4" stroke="#176b80" />
        </svg>
        <span className="ml-[6px] flex-1 text-[15px]">CADCraft</span>
        <div className="flex items-center">
          <button type="button" aria-label="Minimize" className="flex w-[58px] justify-center"><Minus size={16} strokeWidth={1.4} /></button>
          <button type="button" aria-label="Maximize" className="flex w-[58px] justify-center"><Square size={14} strokeWidth={1.8} /></button>
          <button type="button" aria-label="Close" className="flex w-[60px] justify-center"><X size={19} strokeWidth={1.5} /></button>
        </div>
      </header>

      <div className="flex h-[43px] shrink-0 items-center gap-[22px] border-b border-[#12161f] bg-[#3d444f] pl-[13px]">
        {toolbar.map((group) => (
          <div key={group[0]} className="flex">
            {group.map((name) => (
              <button key={name} type="button" aria-label={name} className="flex w-10 justify-center">
                <Icon size={22} box={24}>{barIcons[name]}</Icon>
              </button>
            ))}
          </div>
        ))}
      </div>

      <nav className="flex h-[26px] shrink-0 items-center gap-[14px] bg-[#323841] pb-[2px] pl-[10px] text-[14px]">
        {menus.map((name) => <button key={name} type="button">{name}</button>)}
      </nav>

      <div className="flex h-[34px] shrink-0 items-center border-t border-b border-t-[#2c323b] border-b-[#12161f] bg-[#323841] text-[14px]">
        <button type="button" aria-label="File tabs" className="ml-[9px]">
          <svg width="15" height="15" viewBox="0 0 15 15" aria-hidden="true">
            <path d="M0 0h7v7H0z" fill="#5b9fe6" />
            <path d="M8.500 0H15v7H8.500zM0 8.500h7V15H0zM8.500 8.500H15V15H8.500z" fill="#d5dcea" />
          </svg>
        </button>
        <button type="button" aria-label="New drawing" className="ml-[13px]"><Plus size={18} strokeWidth={1.4} /></button>
        <button type="button" className="ml-5 w-32 text-left text-[#98a0ac]">Start</button>
        <div className="flex h-full w-[212px] items-center bg-[#4c586a] pr-[6px] pl-[10px]">
          <button type="button" className="flex-1 text-left">Bracket</button>
          <button type="button" aria-label="Close Bracket"><X size={15} strokeWidth={1.6} /></button>
        </div>
      </div>

      <div className="flex min-h-0 flex-1">
        <Palette />
        <Canvas />
        <Inspector />
      </div>
      <StatusBar />
    </div>
  );
}
